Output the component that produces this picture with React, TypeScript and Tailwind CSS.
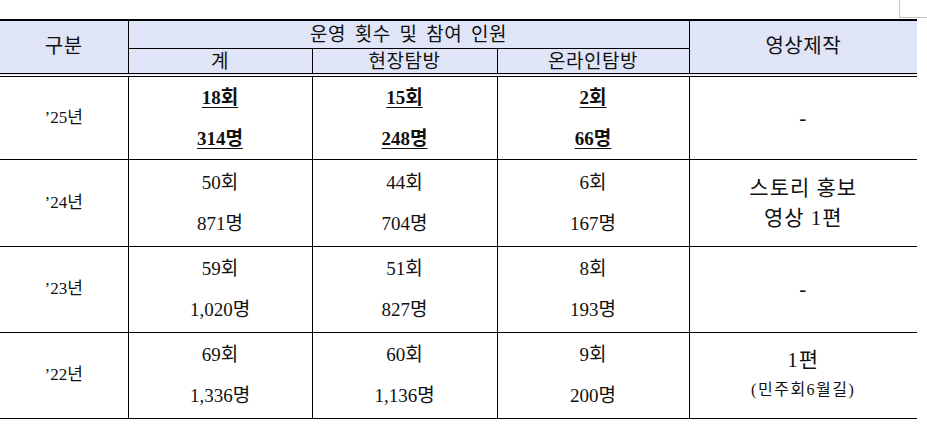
import React from "react";

const rows = [
  {
    year: "’25년",
    bold: true,
    cells: [
      ["18회", "314명"],
      ["15회", "248명"],
      ["2회", "66명"],
    ],
    video: ["-"],
    h: "h-[83px]",
  },
  {
    year: "’24년",
    bold: false,
    cells: [
      ["50회", "871명"],
      ["44회", "704명"],
      ["6회", "167명"],
    ],
    video: ["스토리 홍보", "영상 1편"],
    h: "h-[87px]",
  },
  {
    year: "’23년",
    bold: false,
    cells: [
      ["59회", "1,020명"],
      ["51회", "827명"],
      ["8회", "193명"],
    ],
    video: ["-"],
    h: "h-[86px]",
  },
  {
    year: "’22년",
    bold: false,
    cells: [
      ["69회", "1,336명"],
      ["60회", "1,136명"],
      ["9회", "200명"],
    ],
    video: ["1편", "(민주회6월길)"],
    h: "h-[86px]",
  },
];

const sans = "font-['Noto_Sans_CJK_KR',_'Noto_Sans',_sans-serif]";
const serif = "font-['Liberation_Serif',_'Noto_Sans_CJK_KR',_serif]";

export default function App() {
  return (
    <div className="w-[927px] h-[432px] bg-white text-[#111]">
      <div className="h-[19px] flex justify-end">
        <div className="w-[28px] h-[18px] border-l border-b border-[#c4c4c4]"></div>
      </div>
      <table className="w-[917px] table-fixed border-collapse border-t-2 border-b border-black">
        <colgroup>
          <col className="w-[128px]" />
          <col className="w-[184px]" />
          <col className="w-[185px]" />
          <col className="w-[192px]" />
          <col className="w-[228px]" />
        </colgroup>
        <thead className={`${sans} text-[19px] tracking-[0.5px] bg-[#dfe5f7]`}>
          <tr className="h-[28px]">
            <th rowSpan={2} className="font-normal text-[20px] border-r border-black border-b-4 border-b-black border-double align-middle pb-[3px]">
              구분
            </th>
            <th colSpan={3} className="font-normal border-r border-b border-black leading-[22px] pb-[3px] [word-spacing:4px]">
              운영 횟수 및 참여 인원
            </th>
            <th rowSpan={2} className="font-normal text-[20px] border-b-4 border-double border-black pb-[3px]">
              영상제작
            </th>
          </tr>
          <tr className="h-[26px]">
            <th className="font-normal border-r border-black border-b-4 border-double leading-[21px] pb-[3px]">계</th>
            <th className="font-normal border-r border-black border-b-4 border-double leading-[21px] pb-[3px]">현장탐방</th>
            <th className="font-normal border-r border-black border-b-4 border-double leading-[21px] pb-[3px]">온라인탐방</th>
          </tr>
        </thead>
        <tbody className={`${serif} text-[19px]`}>
          {rows.map((r) => (
            <tr key={r.year} className={`${r.h} border-b border-black`}>
              <td className="border-r border-black text-center text-[17px]">{r.year}</td>
              {r.cells.map((c, i) => (
                <td key={i} className="border-r border-black text-center">
                  {c.map((t) => (
                    <div
                      key={t}
                      className={`leading-[41px] ${r.bold ? "font-bold underline underline-offset-[3px] decoration-1" : ""}`}
                    >
                      {t}
                    </div>
                  ))}
                </td>
              ))}
              <td className="text-center">
                {r.video.map((t) => (
                  <div
                    key={t}
                    className={`leading-[30px] ${t.startsWith("(") ? "text-[16px] tracking-[1.5px]" : "text-[21px] tracking-[1px]"}`}
                  >
                    {t}
                  </div>
                ))}
              </td>
            </tr>
          ))}
        </tbody>
      </table>
    </div>
  );
}
